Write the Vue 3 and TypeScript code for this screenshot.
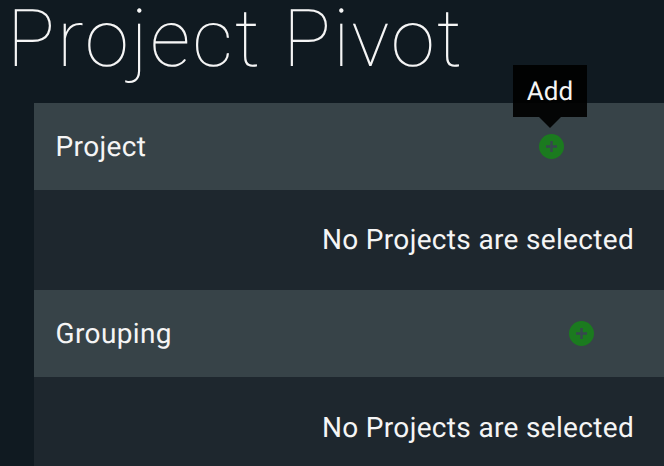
<script setup lang="ts">
const sections = [
  { title: 'Project', inset: 100, tip: true },
  { title: 'Grouping', inset: 70, tip: false },
]
</script>

<template>
  <div class="page">
    <h1 class="title">Project Pivot</h1>
    <section v-for="s in sections" :key="s.title" class="panel">
      <header class="head">
        <span class="name">{{ s.title }}</span>
        <span class="add" :style="{ marginRight: s.inset + 'px' }">
          <svg viewBox="0 0 25 25" width="25" height="25">
            <circle cx="12.5" cy="12.5" r="12.5" fill="#1b7a1f" />
            <path d="M12.5 7v11M7 12.5h11" stroke="#37474f" stroke-width="2.4" fill="none" />
          </svg>
          <span v-if="s.tip" class="tip">Add</span>
        </span>
      </header>
      <div class="body">No Projects are selected</div>
    </section>
  </div>
</template>

<style>
html, body { margin: 0; background: #101a21; overflow: hidden; }
</style>

<style scoped>
.page {
  width: 664px;
  height: 466px;
  overflow: hidden;
  background: #101a21;
  color: #f5f5f5;
  font-family: Roboto, "Liberation Sans", sans-serif;
  text-rendering: geometricPrecision;
  padding-left: 34px;
  box-sizing: border-box;
}
.title {
  margin: 0 0 0 -27px;
  height: 103px;
  font-size: 80px;
  line-height: 78px;
  font-weight: 100;
  letter-spacing: 1.9px;
  white-space: nowrap;
}
.panel { background: #1e272e; }
.head {
  height: 87px;
  background: #374348;
  display: flex;
  align-items: center;
  justify-content: space-between;
  padding-left: 21.5px;
}
.name { font-size: 28px; letter-spacing: 0.38px; }
.add { position: relative; display: flex; }
.tip {
  position: absolute;
  left: 50%;
  bottom: 42px;
  transform: translateX(-50%);
  margin-left: -2px;
  width: 74px;
  height: 52px;
  line-height: 54px;
  padding-left: 1px;
  box-sizing: border-box;
  text-align: center;
  font-size: 26px;
  background: rgba(0, 0, 0, 0.92);
}
.tip::after {
  content: "";
  position: absolute;
  left: 50%;
  top: 100%;
  transform: translateX(-50%);
  border: 11px solid transparent;
  border-bottom: 0;
  border-top-color: rgba(0, 0, 0, 0.92);
}
.body {
  height: 100px;
  box-sizing: border-box;
  display: flex;
  align-items: center;
  justify-content: flex-end;
  padding-right: 30px;
  font-size: 28px;
  letter-spacing: 0.33px;
}
.panel:first-of-type .body { padding-bottom: 2px; }
</style>
